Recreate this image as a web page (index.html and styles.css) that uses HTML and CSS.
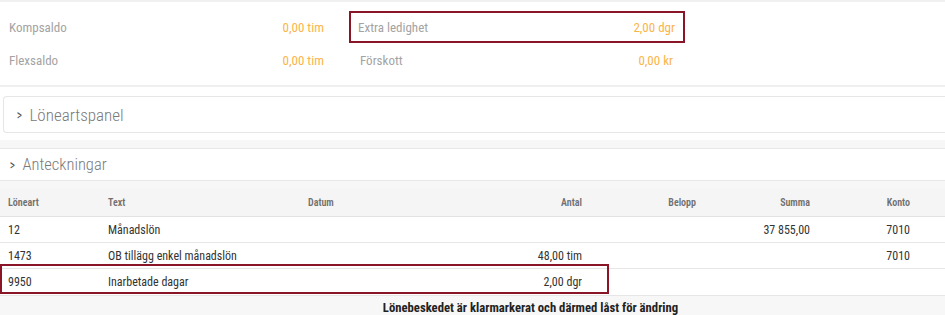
FILE: index.html
```html
<!DOCTYPE html>
<html lang="sv">
<head>
<meta charset="utf-8">
<title>Lönebesked</title>
<link rel="stylesheet" href="styles.css">
</head>
<body>
<div class="page">
  <section class="saldo">
    <div class="saldo-grid">
      <div class="item"><span class="lbl">Kompsaldo</span><span class="val">0,00 tim</span></div>
      <div class="item hl"><span class="lbl">Extra ledighet</span><span class="val">2,00 dgr</span></div>
      <div class="item"><span class="lbl">Flexsaldo</span><span class="val">0,00 tim</span></div>
      <div class="item"><span class="lbl">Förskott</span><span class="val">0,00 kr</span></div>
    </div>
  </section>
  <div class="panel-area">
    <div class="panel boxed"><span class="chev">&gt;</span><span class="ptitle">Löneartspanel</span></div>
  </div>
  <div class="band"></div>
  <div class="panel flat"><span class="chev">&gt;</span><span class="ptitle">Anteckningar</span></div>
  <div class="spacer"></div>
  <div class="tbl">
    <div class="row head">
      <span>Löneart</span><span>Text</span><span>Datum</span><span class="r">Antal</span><span class="r">Belopp</span><span class="r">Summa</span><span class="r">Konto</span><span></span>
    </div>
    <div class="row">
      <span>12</span><span>Månadslön</span><span></span><span class="r"></span><span class="r"></span><span class="r">37 855,00</span><span class="r">7010</span><span></span>
    </div>
    <div class="row">
      <span>1473</span><span>OB tillägg enkel månadslön</span><span></span><span class="r">48,00 tim</span><span class="r"></span><span class="r"></span><span class="r">7010</span><span></span>
    </div>
    <div class="row marked">
      <span>9950</span><span>Inarbetade dagar</span><span></span><span class="r">2,00 dgr</span><span class="r"></span><span class="r"></span><span class="r"></span><span></span>
      <div class="mark"></div>
    </div>
  </div>
  <div class="footer">Lönebeskedet är klarmarkerat och därmed låst för ändring</div>
</div>
</body>
</html>
```
FILE: styles.css
```css
* { box-sizing: border-box; }
html, body { margin: 0; padding: 0; }
body {
  background: #ffffff;
  font-family: Roboto, "Noto Sans", sans-serif;
  width: 945px;
  height: 315px;
  overflow: hidden;
}
.page {
  background: #f0f0f0;
  padding-top: 2px;
}
.saldo {
  background: #fff;
  padding: 9px 0 9px 0;
  border-bottom: 2px solid #efefef;
  height: 85px;
}
.saldo-grid {
  display: grid;
  grid-template-columns: 336px 336px;
  grid-auto-rows: 32px;
  column-gap: 13px;
  row-gap: 1px;
}
.item {
  display: flex;
  justify-content: space-between;
  align-items: center;
  padding: 0 10px 0 9px;
  font-size: 13px;
  font-stretch: 87.5%;
  border: 2px solid transparent;
}
.item .lbl { color: #a3a3a3; }
.item .val { color: #fbb449; }
.item.hl { border-color: #8a1526; padding-left: 7px; padding-right: 8px; }
.saldo-grid .item:nth-child(odd) { border-left: 0; padding-left: 9px; }
.panel-area {
  background: #fff;
  padding: 9px 0 7px 3px;
}
.panel {
  display: flex;
  align-items: center;
  background: #fff;
  color: #7a7a7a;
  font-size: 17px;
  font-weight: 300;
  font-stretch: 87.5%;
}
.panel.boxed {
  height: 37px;
  border: 1px solid #e6e6e6;
  border-right: 0;
  border-radius: 4px 0 0 4px;
  padding-left: 12px;
}
.panel.flat {
  height: 33px;
  border-top: 1px solid #e8e8e8;
  border-bottom: 1px solid #e8e8e8;
  padding-left: 9px;
  font-size: 16.5px;
}
.chev {
  font-size: 14px;
  font-weight: 400;
  color: #555;
  margin-right: 7px;
  transform: scaleX(0.8);
  display: inline-block;
}
.band {
  height: 8px;
  background: #f7f7f7;
}
.spacer { height: 8px; background: #f7f7f7; }
.tbl { background: #fff; }
.row {
  position: relative;
  display: grid;
  grid-template-columns: 100px 200px 190px 100px 114px 114px 100px 1fr;
  height: 26px;
  align-items: center;
  border-bottom: 1px solid #e6e6e6;
  font-size: 12px;
  font-stretch: 84%;
  color: #333;
}
.row > span { padding: 0 8px; white-space: nowrap; }
.row > span.r { text-align: right; }
.row.head {
  height: 28px;
  background: #f5f5f5;
  font-size: 10px;
  font-weight: 600;
  font-stretch: 87.5%;
  color: #6f6f6f;
  border-bottom: 1px solid #e2e2e2;
}
.row.marked { border-bottom: 0; }
.mark {
  position: absolute;
  left: 0;
  top: -5px;
  width: 609px;
  height: 30px;
  border: 2px solid #8a1526;
  pointer-events: none;
}
.footer {
  height: 22px;
  background: #f7f7f7;
  border-top: 1px solid #e6e6e6;
  text-align: center;
  padding-left: 116px;
  font-size: 12.7px;
  font-weight: 700;
  font-stretch: 84%;
  color: #222;
  line-height: 24px;
}
```
